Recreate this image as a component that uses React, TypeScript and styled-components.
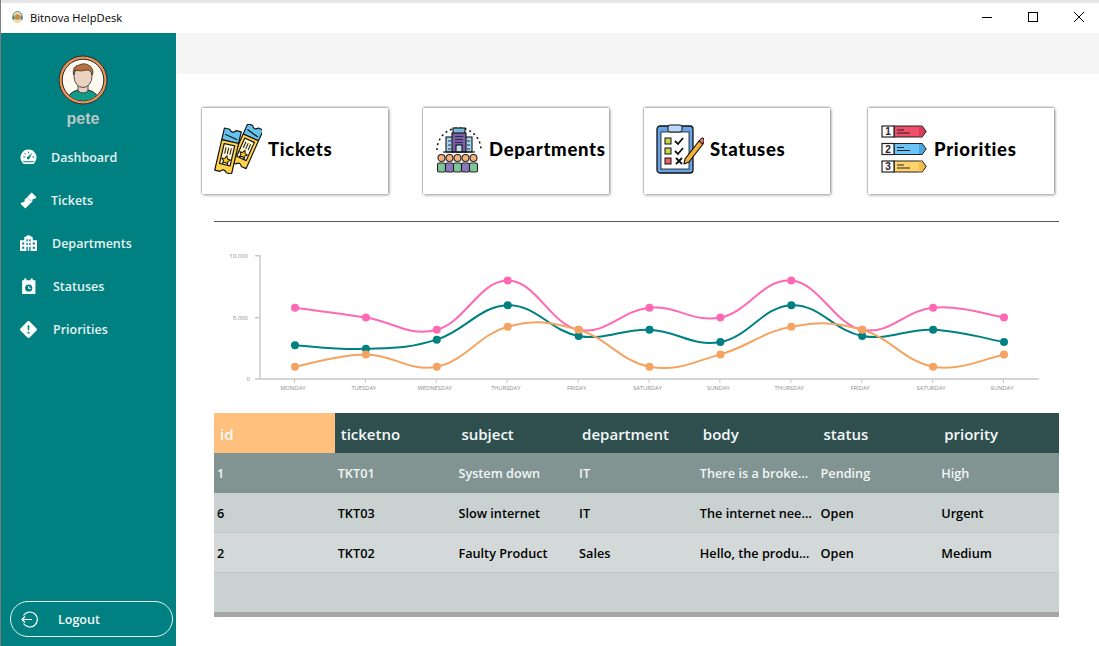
import styled, { createGlobalStyle } from "styled-components";
import { BsExclamationDiamondFill } from "react-icons/bs";

const GlobalStyle = createGlobalStyle`
  html, body, #root { margin: 0; padding: 0; height: 100%; background: #fff; }
  body { font-family: "Open Sans", "Noto Sans", "Liberation Sans", sans-serif; overflow: hidden; }
`;

const Window = styled.div`
  width: 1099px;
  height: 646px;
  display: flex;
  flex-direction: column;
  border-left: 1px solid #7d7d7d;
  box-sizing: border-box;
`;

const TitleBar = styled.div`
  height: 33px;
  box-sizing: border-box;
  border-top: 3px solid #e6e6e6;
  padding: 0 15px 2px 10px;
  display: flex;
  align-items: center;
  background: #fff;
`;

const AppName = styled.span`
  margin-left: 6px;
  font-size: 11.2px;
  color: #000;
  flex: 1;
`;

const WinButton = styled.svg`
  width: 10px;
  height: 10px;
  margin-left: 36px;
  fill: none;
  stroke: #000;
  stroke-width: 1;
`;

const Body = styled.div`
  flex: 1;
  display: flex;
  min-height: 0;
`;

const Sidebar = styled.aside`
  width: 175px;
  background: #008080;
  display: flex;
  flex-direction: column;
  align-items: stretch;
  padding-top: 22px;
  box-sizing: border-box;
`;

const Avatar = styled.svg`
  width: 50px;
  height: 50px;
  align-self: center;
  margin-left: -12px;
`;

const UserName = styled.div`
  align-self: center;
  margin: 5px 0 0 -11px;
  font-size: 16px;
  line-height: 18px;
  font-weight: 700;
  color: #b8c8c5;
  font-family: "Liberation Sans", sans-serif;
`;

const Nav = styled.nav`
  display: flex;
  flex-direction: column;
  margin-top: 8px;
  flex: 1;
`;

const NavItem = styled.a<{ $gap: number }>`
  height: 43px;
  display: flex;
  align-items: center;
  padding-left: 19px;
  gap: ${(p) => p.$gap}px;
  color: #e6f3f2;
  font-size: 12.5px;
  font-weight: 600;
  svg {
    width: 17px;
    height: 17px;
    flex: none;
    fill: #fff;
    color: #fff;
  }
`;

const LogoutButton = styled.button`
  margin: 0 3px 9px 9px;
  height: 36px;
  box-sizing: border-box;
  border: 1px solid #e9f4f3;
  border-radius: 18px;
  background: transparent;
  display: flex;
  align-items: center;
  padding: 0 0 0 9px;
  gap: 19px;
  color: #f2f8f8;
  font: 600 12.5px "Open Sans", sans-serif;
`;

const Main = styled.main`
  flex: 1;
  display: flex;
  flex-direction: column;
  min-width: 0;
`;

const TopStrip = styled.div`
  height: 41px;
  background: #f5f5f5;
`;

const CardRow = styled.div`
  display: flex;
  gap: 35px;
  margin: 34px 0 0 26px;
  & > :last-child {
    margin-left: 3px;
  }
`;

const Card = styled.div`
  width: 186px;
  height: 86px;
  box-sizing: border-box;
  padding: 0 0 4px 12px;
  display: flex;
  align-items: center;
  gap: 6px;
  background: #fff;
  box-shadow: 1px 1px 3px rgba(0, 0, 0, 0.42), 0 -1px 2px rgba(0, 0, 0, 0.3),
    -1px 0 0 rgba(0, 0, 0, 0.1);
`;

const CardIcon = styled.svg`
  width: 48px;
  height: 50px;
  flex: none;
`;

const CardTitle = styled.span`
  font-family: Lato, sans-serif;
  font-weight: 900;
  font-size: 18.5px;
  letter-spacing: 0.7px;
  color: #000;
  white-space: nowrap;
`;

const Rule = styled.hr`
  border: 0;
  height: 1px;
  background: #555;
  margin: 27px 40px 0 38px;
`;

const ChartSvg = styled.svg`
  display: block;
  width: 845px;
  height: 150px;
  margin: 23px 0 0 38px;
  font-family: "Open Sans", sans-serif;
`;

const GridWrap = styled.div`
  margin: 18px 40px 0 38px;
  height: 204px;
  box-sizing: border-box;
  background: #cad2d1;
  border-bottom: 5px solid #a6a6a6;
`;

const Table = styled.table`
  width: 100%;
  border-collapse: collapse;
  table-layout: fixed;
`;

const Head = styled.th<{ $active?: boolean }>`
  height: 40px;
  box-sizing: border-box;
  padding: 1px 0 0 6px;
  text-align: left;
  font-size: 15px;
  font-weight: 600;
  color: #f4f8f8;
  background: ${(p) => (p.$active ? "#ffc07e" : "#2f4f4f")};
`;

const Row = styled.tr<{ $tone: "selected" | "plain" | "alt" }>`
  height: ${(p) => (p.$tone === "selected" ? 39 : 40)}px;
  background: ${(p) =>
    p.$tone === "selected" ? "#819492" : p.$tone === "alt" ? "#d3d9d9" : "#cad2d1"};
  color: ${(p) => (p.$tone === "selected" ? "#f2f6f5" : "#000")};
  border-bottom: 1px solid ${(p) => (p.$tone === "selected" ? "#819492" : "#bfc8c7")};
`;

const Cell = styled.td`
  box-sizing: border-box;
  padding: 2px 0 0 3px;
  font-size: 12.7px;
  font-weight: 550;
  white-space: nowrap;
  overflow: hidden;
`;

const days = [
  "MONDAY", "TUESDAY", "WEDNESDAY", "THURSDAY", "FRIDAY", "SATURDAY",
  "SUNDAY", "THURSDAY", "FRIDAY", "SATURDAY", "SUNDAY",
];

const series = [
  { color: "#ff69b4", values: [5800, 5000, 4000, 8000, 4000, 5800, 5000, 8000, 4000, 5800, 5000] },
  { color: "#008080", values: [2750, 2450, 3200, 6000, 3500, 4000, 3000, 6000, 3500, 4000, 3000] },
  { color: "#f4a460", values: [1000, 2000, 1000, 4250, 4000, 1000, 2000, 4250, 4000, 1000, 2000] },
];

const px = (i: number) => 295 + i * 70.9;
const py = (v: number) => 379 - v * 0.0123;

// catmull-rom through the points, same look as the original smooth lines
function smooth(values: number[]) {
  const pts = values.map((v, i) => [px(i), py(v)]);
  let d = `M${pts[0][0]} ${pts[0][1]}`;
  for (let i = 0; i < pts.length - 1; i++) {
    const p0 = pts[Math.max(i - 1, 0)];
    const p1 = pts[i];
    const p2 = pts[i + 1];
    const p3 = pts[Math.min(i + 2, pts.length - 1)];
    const c1x = p1[0] + (p2[0] - p0[0]) / 5;
    const c1y = p1[1] + (p2[1] - p0[1]) / 5;
    const c2x = p2[0] - (p3[0] - p1[0]) / 5;
    const c2y = p2[1] - (p3[1] - p1[1]) / 5;
    d += ` C${c1x} ${c1y} ${c2x} ${c2y} ${p2[0]} ${p2[1]}`;
  }
  return d;
}

const columns = ["id", "ticketno", "subject", "department", "body", "status", "priority"];

const rows: { tone: "selected" | "plain" | "alt"; cells: string[] }[] = [
  { tone: "selected", cells: ["1", "TKT01", "System down", "IT", "There is a broke…", "Pending", "High"] },
  { tone: "plain", cells: ["6", "TKT03", "Slow internet", "IT", "The internet nee…", "Open", "Urgent"] },
  { tone: "alt", cells: ["2", "TKT02", "Faulty Product", "Sales", "Hello, the produ…", "Open", "Medium"] },
];

function Chart() {
  return (
    <ChartSvg viewBox="214 245 845 150">
      <g stroke="#c8c8c8" strokeWidth="1.4" fill="none">
        <path d="M255 255.700H260V379M255 317.700H260M255 379H1039" />
        {days.map((_, i) => (
          <path key={i} d={`M${px(i) - 0.5} 379V383`} strokeWidth="1" />
        ))}
      </g>
      <g fontSize="6" fill="#8c8c8c" textAnchor="end">
        <text x="248" y="258">10,000</text>
        <text x="248" y="320">5,000</text>
        <text x="250" y="381">0</text>
      </g>
      <g fontSize="5.800" fill="#8c8c8c" textAnchor="middle">
        {days.map((d, i) => (
          <text key={i} x={px(i) - 2} y="390">{d}</text>
        ))}
      </g>
      {series.map((s) => (
        <g key={s.color}>
          <path d={smooth(s.values)} fill="none" stroke={s.color} strokeWidth="2" />
          {s.values.map((v, i) => (
            <circle key={i} cx={px(i)} cy={py(v)} r="4" fill={s.color} />
          ))}
        </g>
      ))}
    </ChartSvg>
  );
}

function OneTicket({ transform }: { transform: string }) {
  return (
    <g transform={transform} stroke="#111" strokeWidth="1.100" strokeLinejoin="round">
      <path d="M-8 -20H-3Q0 -16 3 -20H8V-9H-8Z" fill="#64c4ee" />
      <path d="M-8 -9H8V20H3Q0 16 -3 20H-8Z" fill="#ffd24a" />
      <path d="M-5 -6H5V13H-5Z" fill="#fff6cf" />
      <path d="M-2.500 -3V3M0 -3V3M2.500 -3V3" fill="none" strokeWidth="0.9" />
      <path d="M0 4.500L1.300 7.300L4 7.700L2 9.600L2.500 12L0 10.800L-2.500 12L-2 9.600L-4 7.700L-1.300 7.300Z" fill="#ffc61a" strokeWidth="0.9" />
      <path d="M-6 -14.500L6 -12" fill="none" />
    </g>
  );
}

function TicketsIcon() {
  return (
    <CardIcon viewBox="0 0 48 50">
      <OneTicket transform="translate(33 22) rotate(24) scale(1.050)" />
      <OneTicket transform="translate(14 27) rotate(13) scale(1.080)" />
    </CardIcon>
  );
}

function DepartmentsIcon() {
  const heads = [7.5, 15.5, 23.5, 31.5, 39.5];
  const bodies = ["#7ec69a", "#8e78bd", "#7ec69a", "#8e78bd", "#7ec69a"];
  return (
    <CardIcon viewBox="0 0 48 50">
      <path d="M2 26A22 22 0 0 1 46 26" fill="none" stroke="#111" strokeWidth="1.500" strokeDasharray="2 3" />
      <g stroke="#111" strokeWidth="1.100">
        <rect x="18" y="4" width="12" height="6" fill="#7db8d8" />
        <rect x="11" y="13" width="7" height="15" fill="#a5d7f0" />
        <rect x="30" y="13" width="7" height="15" fill="#a5d7f0" />
        <rect x="17" y="9" width="14" height="19" fill="#7b5fa8" />
        <rect x="21" y="21" width="6" height="7" fill="#bfe3f5" />
        <path d="M8 28H40" />
      </g>
      <path d="M20 12.500H28M20 15.500H28M20 18.500H28M13 17H16M13 21H16M13 25H16M32 17H35M32 21H35M32 25H35" stroke="#2c2a44" strokeWidth="1.200" />
      {heads.map((x, i) => (
        <g key={x} stroke="#222" strokeWidth="1.100">
          <circle cx={x - 1} cy="34" r="3.500" fill="#f6b27c" />
          <rect x={x - 5} y="39" width="8" height="9" rx="1.500" fill={bodies[i]} />
        </g>
      ))}
    </CardIcon>
  );
}

function StatusesIcon() {
  return (
    <CardIcon viewBox="0 0 48 50">
      <rect x="1" y="2" width="36" height="47" rx="3" fill="#6aa4e8" stroke="#111" strokeWidth="1.300" />
      <rect x="5" y="8" width="28" height="37" fill="#fff" stroke="#111" strokeWidth="0.800" />
      <rect x="12" y="1" width="14" height="7" rx="2" fill="#bcd8f8" stroke="#111" strokeWidth="1" />
      <g stroke="#111" strokeWidth="1">
        <rect x="9" y="14" width="6" height="6" fill="#c9d84c" />
        <rect x="9" y="24" width="6" height="6" fill="#c9d84c" />
        <rect x="9" y="34" width="6" height="6" fill="#f0606e" />
      </g>
      <path d="M19 17L22 20L27 14M19 27L22 30L27 24M20 34L26 40M26 34L20 40" fill="none" stroke="#111" strokeWidth="1.800" />
      <path d="M29 35L43 17L47 20L33 38L28 40Z" fill="#f5b13a" stroke="#111" strokeWidth="1.200" strokeLinejoin="round" />
      <path d="M43 17L45 14.500Q47 13 48 15Q48.500 17 47 20Z" fill="#ef6f6f" stroke="#111" strokeWidth="1" />
    </CardIcon>
  );
}

function PrioritiesIcon() {
  const tags = [
    { n: "1", y: 2, color: "#f0506a", dark: "#d83c56" },
    { n: "2", y: 19.500, color: "#6cc5f8", dark: "#4aa4e0" },
    { n: "3", y: 37, color: "#ffd36b", dark: "#f4b94a" },
  ];
  return (
    <CardIcon viewBox="0 0 48 50">
      {tags.map((t) => (
        <g key={t.n} stroke="#222" strokeWidth="1.200">
          <path d={`M14 ${t.y}H42L46 ${t.y + 5.500}L42 ${t.y + 11}H14Z`} fill={t.color} />
          <path d={`M39 ${t.y + 0.600}H42L45.500 ${t.y + 5.500}L42 ${t.y + 10.400}H39Z`} fill={t.dark} stroke="none" />
          <rect x="2" y={t.y} width="12" height="11" fill="#fff" />
          <text x="8" y={t.y + 9} fontSize="10" fontWeight="700" textAnchor="middle" fill="#222" stroke="none" fontFamily="Liberation Sans, sans-serif">
            {t.n}
          </text>
          <path d={`M17 ${t.y + 4}H24M17 ${t.y + 7}H30`} fill="none" strokeWidth="1" />
        </g>
      ))}
    </CardIcon>
  );
}

function GaugeIcon() {
  return (
    <svg viewBox="0 0 16 16">
      <path fillRule="evenodd" d="M8 0.500A7.500 7.500 0 0 1 14 12.500Q13.500 14 12 14H4Q2.500 14 2 12.500A7.500 7.500 0 0 1 8 0.500ZM3 7V8H5V7ZM11.500 7V8H13.500V7ZM4.500 3.500L4 4L5.200 5.200L5.800 4.600ZM7.500 2.500V4H8.500V2.500ZM11.500 3.500L7.500 7.200A1.300 1.300 0 1 0 9 8.800ZM3 11.500V12.500H13V11.500Z" />
    </svg>
  );
}

function TicketIcon() {
  return (
    <svg viewBox="0 0 16 16">
      <path d="M11 0.500L15.500 5L14 6.500Q12.800 6 12 6.800Q11.300 7.600 11.800 8.800L6 14.500L5 15.500L0.500 11L2 9.500Q3.200 10 4 9.200Q4.700 8.400 4.200 7.200Z" />
      <path d="M7 5L11 9" stroke="#008080" strokeWidth="0.700" strokeDasharray="1 1" fill="none" />
    </svg>
  );
}

function DepartmentIcon() {
  return (
    <svg viewBox="0 0 16 16">
      <path fillRule="evenodd" d="M8 0L12 2V5H16V15H0V5H4V2ZM2 7V9H4V7ZM2 11V13H4V11ZM6 4V6H7.300V4ZM8.700 4V6H10V4ZM6 7.500V9.500H7.300V7.500ZM8.700 7.500V9.500H10V7.500ZM6 11V15H7.300V11ZM8.700 11V15H10V11ZM12 7V9H14V7ZM12 11V13H14V11Z" />
    </svg>
  );
}

function StatusIcon() {
  return (
    <svg viewBox="0 0 16 16">
      <path fillRule="evenodd" d="M2 2H4V0.500H6V2H10V0.500H12V2H14.500V15H2ZM8.200 6A3.400 3.400 0 1 0 8.201 12.800A3.400 3.400 0 1 0 8.200 6ZM7.700 7.500H8.700V9.200H10.300V10.200H7.700Z" />
    </svg>
  );
}

export default function App() {
  return (
    <Window>
      <GlobalStyle />
      <TitleBar>
        <svg width="13" height="13" viewBox="0 0 13 13">
          <circle cx="6.500" cy="6.500" r="5.500" fill="#f5d9a8" />
          <circle cx="6.500" cy="6" r="2.800" fill="#c88a4a" />
          <path d="M2 7V5A4.500 4.500 0 0 1 11 5V7" fill="none" stroke="#4a8a8a" strokeWidth="1" />
          <rect x="1.500" y="5.500" width="2" height="3" fill="#2f7f86" />
          <rect x="9.500" y="5.500" width="2" height="3" fill="#2f7f86" />
        </svg>
        <AppName>Bitnova HelpDesk</AppName>
        <WinButton viewBox="0 0 10 10"><path d="M0 5.500H10" /></WinButton>
        <WinButton viewBox="0 0 10 10"><rect x="0.500" y="0.500" width="9" height="9" /></WinButton>
        <WinButton viewBox="0 0 10 10"><path d="M0 0L10 10M10 0L0 10" /></WinButton>
      </TitleBar>
      <Body>
        <Sidebar>
          <Avatar viewBox="0 0 50 50">
            <defs>
              <clipPath id="face-clip"><circle cx="25" cy="25" r="20.500" /></clipPath>
            </defs>
            <circle cx="25" cy="25" r="24" fill="#e8935a" stroke="#2a2a2a" strokeWidth="1" />
            <circle cx="25" cy="25" r="20.800" fill="#fffaf0" stroke="#2a2a2a" strokeWidth="1" />
            <g clipPath="url(#face-clip)">
              <path d="M8 50Q9 37 20 35H30Q41 37 42 50Z" fill="#0f9c86" stroke="#2a2a2a" strokeWidth="1" />
              <path d="M20 29H30V36Q25 40 20 36Z" fill="#e6d2c2" stroke="#2a2a2a" strokeWidth="0.800" />
              <ellipse cx="25" cy="21.500" rx="9" ry="11" fill="#ecd3bf" stroke="#2a2a2a" strokeWidth="0.800" />
              <path d="M15.500 20Q14 11 21 10Q27 7 32 11Q36 14 34.500 20Q33 15 29 15Q22 17 17 15Q16 17 15.500 20Z" fill="#b8703c" stroke="#2a2a2a" strokeWidth="0.700" />
            </g>
          </Avatar>
          <UserName>pete</UserName>
          <Nav>
            <NavItem $gap={14}><GaugeIcon />Dashboard</NavItem>
            <NavItem $gap={14}><TicketIcon />Tickets</NavItem>
            <NavItem $gap={15}><DepartmentIcon />Departments</NavItem>
            <NavItem $gap={16}><StatusIcon />Statuses</NavItem>
            <NavItem $gap={16}><BsExclamationDiamondFill />Priorities</NavItem>
          </Nav>
          <LogoutButton>
            <svg width="19" height="19" viewBox="0 0 19 19" fill="none" stroke="#fff" strokeWidth="1.200">
              <path d="M3.500 5.500A7.500 7.500 0 1 1 3.500 13.500" />
              <path d="M12 9.500H2M5 6.500L2 9.500L5 12.500" />
            </svg>
            Logout
          </LogoutButton>
        </Sidebar>
        <Main>
          <TopStrip />
          <CardRow>
            <Card><TicketsIcon /><CardTitle>Tickets</CardTitle></Card>
            <Card><DepartmentsIcon /><CardTitle>Departments</CardTitle></Card>
            <Card><StatusesIcon /><CardTitle>Statuses</CardTitle></Card>
            <Card><PrioritiesIcon /><CardTitle>Priorities</CardTitle></Card>
          </CardRow>
          <Rule />
          <Chart />
          <GridWrap>
            <Table>
              <thead>
                <tr>
                  {columns.map((c, i) => (
                    <Head key={c} $active={i === 0}>{c}</Head>
                  ))}
                </tr>
              </thead>
              <tbody>
                {rows.map((r) => (
                  <Row key={r.cells[0]} $tone={r.tone}>
                    {r.cells.map((c, i) => (
                      <Cell key={i}>{c}</Cell>
                    ))}
                  </Row>
                ))}
              </tbody>
            </Table>
          </GridWrap>
        </Main>
      </Body>
    </Window>
  );
}
